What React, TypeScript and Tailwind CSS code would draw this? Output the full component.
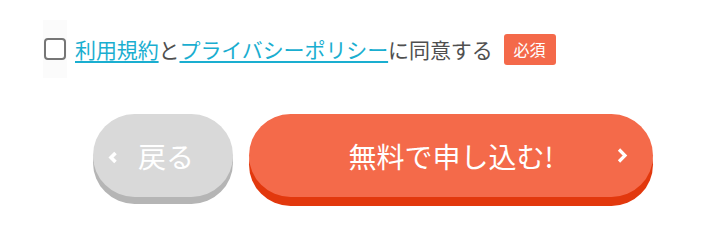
import React from "react";

const font = { fontFamily: '"Noto Sans CJK JP", "Noto Sans", sans-serif' };

const App = () => {
  return (
    <div className="w-[712px] h-[232px] bg-white" style={font}>
      <div className="flex items-center pt-[20px] pl-[43px]">
        <div className="w-[24px] h-[58px] bg-[#fbfbfb] flex items-center justify-center">
          <span className="block w-[22px] h-[22px] border-2 border-[#767676] rounded-[4px] bg-white" />
        </div>
        <p className="ml-[8px] text-[21px] leading-none text-[#4f4f4f] tracking-[-0.1px]">
          <a href="#" className="text-[#1aaed0] underline decoration-2 underline-offset-[3px]">
            利用規約
          </a>
          と
          <a href="#" className="text-[#1aaed0] underline decoration-2 underline-offset-[3px]">
            プライバシーポリシー
          </a>
          に同意する
        </p>
        <span className="ml-[11px] w-[52px] h-[31px] flex items-center justify-center rounded-[3px] bg-[#f4694a] text-white text-[16px]">
          必須
        </span>
      </div>

      <div className="flex mt-[36px] pl-[93px] gap-[16px]">
        <button className="w-[140px] h-[83px] rounded-full bg-[#d9d9d9] shadow-[0_7px_0_#b5b5b5] flex items-center pl-[15px] text-white">
          <svg width="10" height="13" viewBox="0 0 10 13" className="mt-[4px]">
            <polyline points="7.5,2 3,6.5 7.5,11" fill="none" stroke="white" strokeWidth="3.6" />
          </svg>
          <span className="ml-[20px] text-[28px] leading-none">戻る</span>
        </button>
        <button className="relative w-[404px] h-[83px] rounded-full bg-[#f46a4a] shadow-[0_9px_0_#e2380d] flex items-center justify-center text-white">
          <span className="text-[28px] leading-none">無料で申し込む!</span>
          <svg width="11" height="15" viewBox="0 0 11 15" className="absolute right-[25px] top-[34px]">
            <polyline points="2,1.5 8,7.5 2,13.5" fill="none" stroke="white" strokeWidth="3.2" />
          </svg>
        </button>
      </div>
    </div>
  );
};

export default App;
